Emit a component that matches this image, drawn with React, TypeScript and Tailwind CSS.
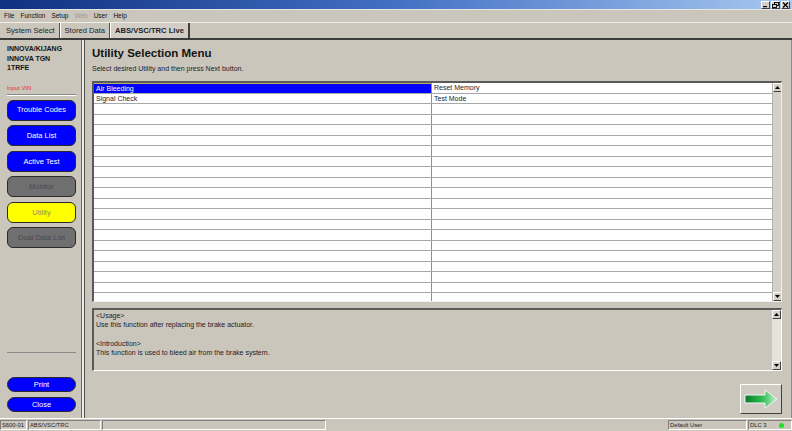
import React from "react";

const bg = "bg-[#cac6bc]";

const sideButtons = [
  { label: "Trouble Codes", cls: "bg-[#0000ff] text-white" },
  { label: "Data List", cls: "bg-[#0000ff] text-white" },
  { label: "Active Test", cls: "bg-[#0000ff] text-white" },
  { label: "Monitor", cls: "bg-[#6f6f6f] text-[#4a4a4a]" },
  { label: "Utility", cls: "bg-[#ffff00] text-[#8f8f5a]" },
  { label: "Dual Data List", cls: "bg-[#6f6f6f] text-[#4a4a4a]" },
];

const rows = [
  ["Air Bleeding", "Reset Memory"],
  ["Signal Check", "Test Mode"],
  ...Array.from({ length: 19 }, () => ["", ""]),
];

function ScrollArrow({ up }: { up?: boolean }) {
  return (
    <div className="w-[9px] h-[9px] bg-[#d4d0c8] border-t border-l border-t-white border-l-white border-b border-r border-b-[#404040] border-r-[#404040] flex items-center justify-center">
      <svg width="5" height="3" viewBox="0 0 5 3">
        {up ? <polygon points="2.5,0 5,3 0,3" fill="#000" /> : <polygon points="0,0 5,0 2.5,3" fill="#000" />}
      </svg>
    </div>
  );
}

function WinButton({ kind }: { kind: "min" | "max" | "close" }) {
  return (
    <div className="w-[9px] h-[8px] bg-[#d4d0c8] border border-t-white border-l-white border-b-[#404040] border-r-[#404040] flex items-center justify-center">
      <svg width="7" height="6" viewBox="0 0 7 6">
        {kind === "min" && <rect x="1" y="4" width="4" height="1.2" fill="#000" />}
        {kind === "max" && (
          <g fill="none" stroke="#000" strokeWidth="0.9">
            <rect x="2.5" y="0.5" width="4" height="3" />
            <rect x="0.5" y="2.5" width="4" height="3" fill="#d4d0c8" />
          </g>
        )}
        {kind === "close" && (
          <path d="M1 0.5 L6 5.5 M6 0.5 L1 5.5" stroke="#000" strokeWidth="1.2" />
        )}
      </svg>
    </div>
  );
}

export default function App() {
  return (
    <div
      className={`w-[792px] h-[431px] ${bg} flex flex-col overflow-hidden text-[#1c1c2a]`}
      style={{ fontFamily: '"Liberation Sans", Arial, sans-serif' }}
    >
      {/* Title bar */}
      <div className="h-[9px] bg-gradient-to-r from-[#10307f] via-[#4470c4] to-[#a8c8f0] flex justify-end items-start pt-[1px] pr-[2px] gap-[1px]">
        <WinButton kind="min" />
        <WinButton kind="max" />
        <WinButton kind="close" />
      </div>
      <div className="h-px bg-[#e8e6e0]" />

      {/* Menu */}
      <div className="h-[12px] flex items-center gap-[6px] pl-[4px] text-[6.5px] text-[#101010]">
        <span>File</span>
        <span>Function</span>
        <span>Setup</span>
        <span className="text-[#9a9a9a]">Web</span>
        <span>User</span>
        <span>Help</span>
      </div>

      {/* Tabs */}
      <div className="h-[16px] flex items-stretch pl-[2px] border-t border-[#f0eee8] text-[7.6px]">
        <div className="px-[4px] flex items-center border-r border-r-[#505050]">System Select</div>
        <div className="w-px bg-white" />
        <div className="px-[4px] flex items-center border-r border-r-[#505050]">Stored Data</div>
        <div className="w-px bg-white" />
        <div className="px-[4px] flex items-center font-bold border-r-2 border-r-[#404040] bg-[#d2cec5]">
          ABS/VSC/TRC Live
        </div>
      </div>

      {/* Main */}
      <div className="flex-1 flex border-t-2 border-[#3c3c3c] min-h-0">
        {/* Left panel */}
        <div className="w-[82px] flex flex-col pl-[7px] pr-[5px] pt-[4px] pb-[6px] border-r border-r-[#6a6a6a]">
          <div className="text-[7px] font-bold leading-[9.5px] text-[#141414]">
            <div>INNOVA/KIJANG</div>
            <div>INNOVA TGN</div>
            <div>1TRFE</div>
          </div>
          <div className="mt-[11px] text-[5.8px] text-[#e0302a] leading-[8px]">Input VIN</div>
          <div className="mt-[2px] h-px bg-[#8a8a8a] border-b border-white box-content" />
          <div className="mt-[4px] flex flex-col gap-[4.6px]">
            {sideButtons.map((b) => (
              <div
                key={b.label}
                className={`h-[21px] rounded-[6px] border border-[#2a2a2a] flex items-center justify-center text-[7.5px] ${b.cls}`}
              >
                {b.label}
              </div>
            ))}
          </div>
          <div className="flex-1" />
          <div className="h-px bg-[#8a8a8a]" />
          <div className="mt-[24px] h-[15px] rounded-full border border-[#2a2a2a] bg-[#0000ff] text-white text-[7.5px] flex items-center justify-center">
            Print
          </div>
          <div className="mt-[5px] h-[15px] rounded-full border border-[#2a2a2a] bg-[#0000ff] text-white text-[7.5px] flex items-center justify-center">
            Close
          </div>
        </div>
        <div className="w-[2px] bg-[#eeece6]" />
        <div className="w-px bg-[#505050]" />

        {/* Right panel */}
        <div className="flex-1 flex flex-col pl-[7px] pr-[9px] pt-[6px] border-r border-r-[#8a8a8a]">
          <div className="text-[11.5px] font-bold leading-[14px] text-[#141414]">Utility Selection Menu</div>
          <div className="mt-[4px] text-[7px] leading-[10px]">Select desired Utility and then press Next button.</div>

          {/* Table */}
          <div className="mt-[7px] h-[221px] flex bg-white border-t-2 border-l-2 border-t-[#5a5a5a] border-l-[#5a5a5a] border-b border-r border-b-[#f0f0f0] border-r-[#f0f0f0] overflow-hidden">
            <div className="flex-1 flex flex-col overflow-hidden">
              {rows.map((r, i) => (
                <div key={i} className="h-[10.5px] shrink-0 flex border-b border-[#a8a8a8] text-[7px] leading-[9px]">
                  <div
                    className={`w-[338px] shrink-0 pl-[2px] border-r border-[#909090] ${
                      i === 0 ? "bg-[#0000ff] text-white border-t border-t-[#b8b060]" : ""
                    }`}
                  >
                    {r[0]}
                  </div>
                  <div className="flex-1 pl-[2px]">{r[1]}</div>
                </div>
              ))}
            </div>
            <div className="w-[9px] bg-[#d4d0c8] flex flex-col justify-between border-l border-[#b0b0b0]">
              <ScrollArrow up />
              <ScrollArrow />
            </div>
          </div>

          {/* Info box */}
          <div className="mt-[6px] h-[63px] flex border-t-2 border-l-2 border-t-[#5a5a5a] border-l-[#5a5a5a] border-b border-r border-b-white border-r-white">
            <div className="flex-1 pl-[2px] pt-[1px] text-[7px] leading-[9.3px]">
              <div>&lt;Usage&gt;</div>
              <div>Use this function after replacing the brake actuator.</div>
              <div className="h-[9.3px]" />
              <div>&lt;Introduction&gt;</div>
              <div>This function is used to bleed air from the brake system.</div>
            </div>
            <div className="w-[9px] bg-[#e6e3dc] flex flex-col justify-between">
              <ScrollArrow up />
              <ScrollArrow />
            </div>
          </div>

          {/* Next button */}
          <div className="mt-[13px] flex justify-end">
            <div className="w-[42px] h-[30px] bg-[#d0ccc3] border border-t-white border-l-white border-b-[#404040] border-r-[#404040] flex items-center justify-center">
              <svg width="34" height="20" viewBox="0 0 34 20">
                <defs>
                  <linearGradient id="ng" x1="0" x2="1" y1="0" y2="0">
                    <stop offset="0" stopColor="#0a7a2a" />
                    <stop offset="0.55" stopColor="#2fbf55" />
                    <stop offset="1" stopColor="#c8f0cc" />
                  </linearGradient>
                </defs>
                <polygon
                  points="1,6 21,6 21,1 33,10 21,19 21,14 1,14"
                  fill="url(#ng)"
                  stroke="#f4f4f4"
                  strokeWidth="1"
                  strokeLinejoin="miter"
                />
              </svg>
            </div>
          </div>
        </div>
      </div>

      {/* Status bar */}
      <div className="h-[13px] flex items-stretch border-t border-white text-[5.8px] py-[1px] gap-[1px]">
        <div className="w-[27px] px-[1px] flex items-center border border-t-[#808080] border-l-[#808080] border-b-white border-r-white">
          S600-01
        </div>
        <div className="w-[73px] px-[1px] flex items-center border border-t-[#808080] border-l-[#808080] border-b-white border-r-white">
          ABS/VSC/TRC
        </div>
        <div className="w-[224px] border border-t-[#808080] border-l-[#808080] border-b-white border-r-white" />
        <div className="flex-1" />
        <div className="w-[79px] px-[1px] flex items-center border border-t-[#808080] border-l-[#808080] border-b-white border-r-white">
          Default User
        </div>
        <div className="w-[44px] px-[1px] flex items-center justify-between border border-t-[#808080] border-l-[#808080] border-b-white border-r-white">
          <span>DLC 3</span>
          <span className="w-[5px] h-[5px] rounded-full bg-[#22dd22] mr-[6px]" />
        </div>
      </div>
    </div>
  );
}
